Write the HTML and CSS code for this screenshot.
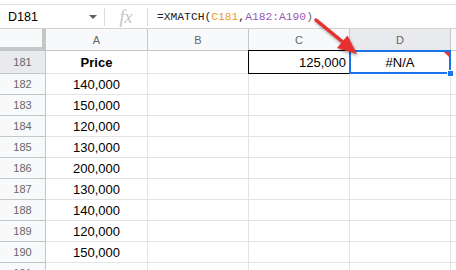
FILE: index.html
```html
<!DOCTYPE html>
<html lang="en">
<head>
    <meta charset="UTF-8">
    <title>XMATCH #N/A</title>
    <link rel="stylesheet" href="styles.css">
</head>
<body>
    <div class="sheet">
        <div class="formula-bar">
            <div class="name-box">
                <span>D181</span>
                <span class="caret"></span>
            </div>
            <div class="sep"></div>
            <div class="fx">fx</div>
            <div class="sep"></div>
            <div class="formula">=XMATCH(<span class="ref-c">C181</span>,<span class="ref-a">A182:A190</span><span class="paren">)</span></div>
        </div>

        <div class="grid">
            <!-- header row -->
            <div class="corner"></div>
            <div class="col-head">A</div>
            <div class="col-head">B</div>
            <div class="col-head">C</div>
            <div class="col-head active">D</div>
            <div class="col-head edge"></div>

            <!-- row 181 -->
            <div class="row-head active">181</div>
            <div class="cell bold">Price</div>
            <div class="cell"></div>
            <div class="cell right boxed">125,000</div>
            <div class="cell selected">
                #N/A
                <span class="sel-frame"></span>
                <span class="err-flag"></span>
                <span class="handle"></span>
            </div>
            <div class="cell edge"></div>

            <div class="row-head">182</div><div class="cell">140,000</div><div class="cell"></div><div class="cell"></div><div class="cell"></div><div class="cell edge"></div>
            <div class="row-head">183</div><div class="cell">150,000</div><div class="cell"></div><div class="cell"></div><div class="cell"></div><div class="cell edge"></div>
            <div class="row-head">184</div><div class="cell">120,000</div><div class="cell"></div><div class="cell"></div><div class="cell"></div><div class="cell edge"></div>
            <div class="row-head">185</div><div class="cell">130,000</div><div class="cell"></div><div class="cell"></div><div class="cell"></div><div class="cell edge"></div>
            <div class="row-head">186</div><div class="cell">200,000</div><div class="cell"></div><div class="cell"></div><div class="cell"></div><div class="cell edge"></div>
            <div class="row-head">187</div><div class="cell">130,000</div><div class="cell"></div><div class="cell"></div><div class="cell"></div><div class="cell edge"></div>
            <div class="row-head">188</div><div class="cell">140,000</div><div class="cell"></div><div class="cell"></div><div class="cell"></div><div class="cell edge"></div>
            <div class="row-head">189</div><div class="cell">120,000</div><div class="cell"></div><div class="cell"></div><div class="cell"></div><div class="cell edge"></div>
            <div class="row-head">190</div><div class="cell">150,000</div><div class="cell"></div><div class="cell"></div><div class="cell"></div><div class="cell edge"></div>
            <div class="row-head">191</div><div class="cell"></div><div class="cell"></div><div class="cell"></div><div class="cell"></div><div class="cell edge"></div>
        </div>

        <!-- callout arrow drawn over the sheet -->
        <svg class="arrow" width="456" height="270" viewBox="0 0 456 270">
            <line x1="316" y1="20" x2="344" y2="43" stroke="#e5302d" stroke-width="3.5" stroke-linecap="round"/>
            <polygon points="357,54 337,48 347.5,35.5" fill="#e5302d"/>
        </svg>
    </div>
</body>
</html>
```

FILE: styles.css
```css
:root {
    --grid-line: #e2e3e3;
    --head-line: #c4c7c5;
    --head-bg: #f8f9fa;
    --head-active: #e8eaed;
    --head-text: #666;
    --select-blue: #1a73e8;
}

* {
    margin: 0;
    padding: 0;
    box-sizing: border-box;
}

body {
    width: 456px;
    height: 270px;
    overflow: hidden;
    background: white;
    font-family: 'Liberation Sans', Arial, sans-serif;
    color: #000;
}

.sheet {
    position: relative;
    height: 270px;
    overflow: hidden;
}

/* formula bar */
.formula-bar {
    margin-top: 4px;
    height: 25px;
    border-top: 1px solid #e0e0e0;
    border-bottom: 1px solid #d3d3d3;
    display: flex;
    align-items: center;
}

.name-box {
    width: 104px;
    padding: 0 7px 0 8px;
    display: flex;
    align-items: center;
    justify-content: space-between;
    font-size: 12.5px;
    color: #000;
}

.caret {
    width: 0;
    height: 0;
    border-left: 4px solid transparent;
    border-right: 4px solid transparent;
    border-top: 4px solid #5f5f5f;
}

.sep {
    width: 1px;
    height: 18px;
    background: #dadce0;
}

.fx {
    width: 42px;
    text-align: center;
    font-family: 'Liberation Serif', 'Times New Roman', serif;
    font-style: italic;
    font-size: 18px;
    color: #c4c4c4;
    line-height: 1;
}

.formula {
    padding-left: 9px;
    font-family: 'Liberation Mono', 'Courier New', monospace;
    font-size: 11.3px;
    color: #202124;
    white-space: nowrap;
}

.ref-c {
    color: #f09a2e;
}

.ref-a {
    color: #9b59b6;
}

.paren {
    color: #666;
}

/* grid */
.grid {
    display: grid;
    grid-template-columns: 46px 102px 101px 101px 101px 1fr;
    grid-template-rows: 22px 23px repeat(10, 21px);
}

.corner {
    background: var(--head-bg);
    border-right: 4px solid var(--head-line);
    border-bottom: 4px solid var(--head-line);
}

.col-head {
    background: var(--head-bg);
    border-right: 1px solid var(--head-line);
    border-bottom: 1px solid var(--head-line);
    color: var(--head-text);
    font-size: 11px;
    display: flex;
    align-items: center;
    justify-content: center;
}

.col-head.active {
    background: var(--head-active);
}

.col-head.edge {
    border-right: none;
}

.row-head {
    background: var(--head-bg);
    border-right: 1px solid var(--head-line);
    border-bottom: 1px solid var(--head-line);
    color: var(--head-text);
    font-size: 11px;
    display: flex;
    align-items: center;
    justify-content: center;
}

.row-head.active {
    background: var(--head-active);
}

.cell {
    border-right: 1px solid var(--grid-line);
    border-bottom: 1px solid var(--grid-line);
    font-size: 13px;
    display: flex;
    align-items: center;
    justify-content: center;
    padding: 0 3px;
    white-space: nowrap;
}

.cell.edge {
    border-right: none;
}

.cell.bold {
    font-weight: bold;
}

.cell.right {
    justify-content: flex-end;
}

.cell.boxed {
    position: relative;
    z-index: 1;
    border-right-color: #000;
    border-bottom-color: #000;
    box-shadow: -1px 0 0 #000, 0 -1px 0 #000, -1px -1px 0 #000;
}

.cell.selected {
    position: relative;
    z-index: 2;
}

.sel-frame {
    position: absolute;
    top: -1px;
    left: -1px;
    right: -1px;
    bottom: -1px;
    border: 2px solid var(--select-blue);
}

.err-flag {
    position: absolute;
    top: 1px;
    right: 1px;
    width: 0;
    height: 0;
    border-left: 5px solid transparent;
    border-top: 5px solid #e53935;
}

.handle {
    position: absolute;
    right: -4px;
    bottom: -4px;
    width: 7px;
    height: 7px;
    background: var(--select-blue);
    border: 1px solid white;
}

.arrow {
    position: absolute;
    top: 0;
    left: 0;
    pointer-events: none;
    z-index: 5;
    filter: drop-shadow(1px 2px 1.5px rgba(0, 0, 0, 0.35));
}
```
